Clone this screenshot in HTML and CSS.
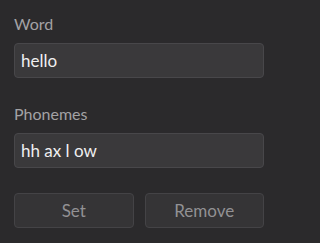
FILE: index.html
```html
<!DOCTYPE html>
<html>
<head>
<meta charset="utf-8">
<link rel="stylesheet" href="styles.css">
</head>
<body>
<div class="panel">
  <div class="field">
    <label class="label">Word</label>
    <div class="input">hello</div>
  </div>
  <div class="field">
    <label class="label">Phonemes</label>
    <div class="input">hh ax l ow</div>
  </div>
  <div class="actions">
    <button class="btn">Set</button>
    <button class="btn">Remove</button>
  </div>
</div>
</body>
</html>
```

FILE: styles.css
```css
html, body {
  margin: 0;
  padding: 0;
  background: #2b2a2c;
}
body {
  font-family: Lato, "Noto Sans", sans-serif;
  width: 280px;
  height: 243px;
  overflow: hidden;
}
.panel {
  padding: 14px 16px 0 14px;
  display: flex;
  flex-direction: column;
}
.field {
  display: flex;
  flex-direction: column;
  gap: 9px;
  margin-bottom: 26px;
}
.label {
  font-size: 16px;
  line-height: 20px;
  color: #a3a2a5;
}
.input {
  box-sizing: border-box;
  height: 35px;
  border: 1px solid #48474a;
  border-radius: 4px;
  background: #3a393b;
  color: #efeff0;
  font-size: 17px;
  line-height: 33px;
  padding: 0 6px;
}
.field + .actions {
  margin-top: -1px;
}
.actions {
  display: grid;
  grid-template-columns: 1fr 1fr;
  gap: 11px;
}
.btn {
  box-sizing: border-box;
  height: 35px;
  border: 1px solid #444346;
  border-radius: 4px;
  background: #353436;
  color: #929194;
  font-family: Lato, "Noto Sans", sans-serif;
  font-size: 17px;
  padding: 0;
}
```
